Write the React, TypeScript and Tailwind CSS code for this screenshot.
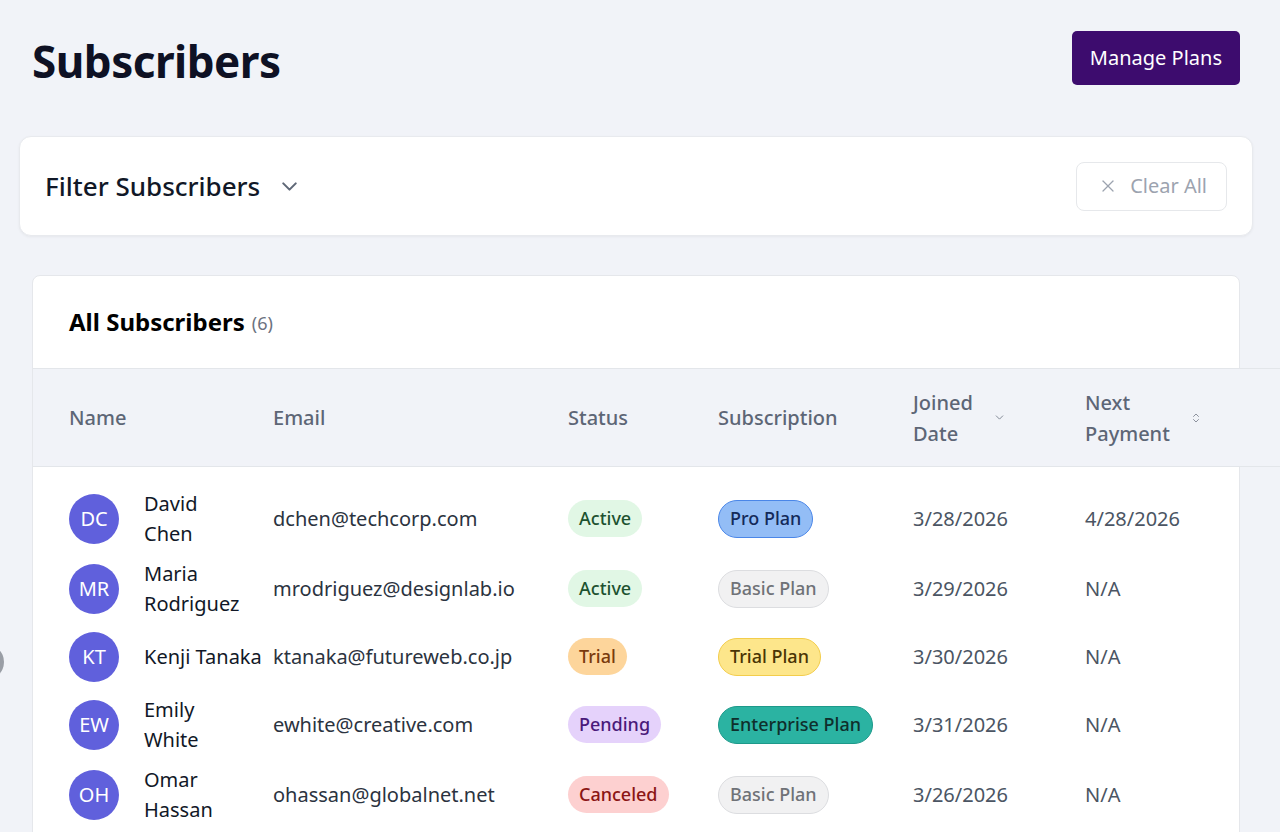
import { ChevronDown, ChevronsUpDown, X } from "lucide-react";

type Status = "Active" | "Trial" | "Pending" | "Canceled";
type Plan = "Pro Plan" | "Basic Plan" | "Trial Plan" | "Enterprise Plan";

interface Subscriber {
  initials: string;
  name: string[];
  email: string;
  status: Status;
  plan: Plan;
  joined: string;
  next: string;
}

const subscribers: Subscriber[] = [
  { initials: "DC", name: ["David", "Chen"], email: "dchen@techcorp.com", status: "Active", plan: "Pro Plan", joined: "3/28/2026", next: "4/28/2026" },
  { initials: "MR", name: ["Maria", "Rodriguez"], email: "mrodriguez@designlab.io", status: "Active", plan: "Basic Plan", joined: "3/29/2026", next: "N/A" },
  { initials: "KT", name: ["Kenji Tanaka"], email: "ktanaka@futureweb.co.jp", status: "Trial", plan: "Trial Plan", joined: "3/30/2026", next: "N/A" },
  { initials: "EW", name: ["Emily", "White"], email: "ewhite@creative.com", status: "Pending", plan: "Enterprise Plan", joined: "3/31/2026", next: "N/A" },
  { initials: "OH", name: ["Omar", "Hassan"], email: "ohassan@globalnet.net", status: "Canceled", plan: "Basic Plan", joined: "3/26/2026", next: "N/A" },
];

const statusStyles: Record<Status, string> = {
  Active: "bg-[#e1f7e5] text-[#1d5230]",
  Trial: "bg-[#fdd59b] text-[#7a3a0d]",
  Pending: "bg-[#e5d2fb] text-[#4a1a7a]",
  Canceled: "bg-[#fdd0d0] text-[#8b1515]",
};

const planStyles: Record<Plan, string> = {
  "Pro Plan": "bg-[#93bdf6] border-[#4a86e8] text-[#142a5a]",
  "Basic Plan": "bg-[#f1f1f2] border-[#dcdde0] text-[#6f7277]",
  "Trial Plan": "bg-[#fde68b] border-[#f3cd4b] text-[#4a3505]",
  "Enterprise Plan": "bg-[#2bb3a2] border-[#1d998a] text-[#0f2f2c]",
};

function SortHeader({ lines, icon }: { lines: string[]; icon: "down" | "both" }) {
  return (
    <div className="flex items-center gap-[20px]">
      <span className="flex flex-col">
        {lines.map((l) => (
          <span key={l}>{l}</span>
        ))}
      </span>
      {icon === "down" ? (
        <ChevronDown size={13} strokeWidth={1.5} className="text-[#6b7280]" />
      ) : (
        <ChevronsUpDown size={12} strokeWidth={1.5} className="text-[#6b7280]" />
      )}
    </div>
  );
}

export default function App() {
  return (
    <div
      className="relative min-h-screen overflow-hidden bg-[#f1f3f8] pl-[32px] pr-[40px] pt-[31px] text-[#1f2937]"
      style={{ fontFamily: '"Noto Sans", "Open Sans", sans-serif' }}
    >
      {/* page header */}
      <div className="flex items-center justify-between">
        <h1 className="mt-[6px] text-[44px] leading-none font-bold tracking-[-0.5px] text-[#0e1124]">Subscribers</h1>
        <button className="h-[54px] rounded-[5px] bg-[#3d0c6e] px-[18px] text-[20px] text-white">
          Manage Plans
        </button>
      </div>

      {/* filter bar */}
      <div className="mx-[-13px] mt-[51px] flex h-[100px] items-center justify-between rounded-xl border border-[#e8eaee] bg-white pl-[25px] pr-[25px] shadow-[0_1px_3px_rgba(0,0,0,0.05)]">
        <div className="flex items-center gap-[17px]">
          <span className="text-[26px] font-medium text-[#111827]">Filter Subscribers</span>
          <ChevronDown size={25} strokeWidth={2} className="text-[#5f6877]" />
        </div>
        <button className="flex h-[49px] items-center gap-[12px] rounded-lg border border-[#e6e8eb] pl-[21px] pr-[19px] text-[20px] text-[#9ca3af]">
          <X size={20} strokeWidth={1.5} />
          Clear All
        </button>
      </div>

      {/* subscribers table */}
      <div className="mt-[39px] rounded-t-lg border border-[#e5e7eb] bg-white pb-[24px]">
        <div className="flex h-[92px] items-center gap-[7px] pl-[36px]">
          <span className="text-[24px] font-bold text-black">All Subscribers</span>
          <span className="mt-[3px] text-[18px] text-[#6b7280]">(6)</span>
        </div>
        <table className="w-[1290px] table-fixed border-collapse text-left text-[20px]">
          <colgroup>
            <col className="w-[234px]" />
            <col className="w-[295px]" />
            <col className="w-[150px]" />
            <col className="w-[195px]" />
            <col className="w-[172px]" />
            <col className="w-[196px]" />
            <col className="w-[48px]" />
          </colgroup>
          <thead>
            <tr className="h-[98px] border-y border-[#e3e6ea] bg-[#f1f3f8] font-medium text-[#5d6676]">
              <th className="pl-[36px] font-medium">Name</th>
              <th className="pl-[6px] font-medium">Email</th>
              <th className="pl-[6px] font-medium">Status</th>
              <th className="pl-[6px] font-medium">Subscription</th>
              <th className="pl-[6px] font-medium leading-[31px]">
                <SortHeader lines={["Joined", "Date"]} icon="down" />
              </th>
              <th className="pl-[6px] font-medium leading-[31px]">
                <SortHeader lines={["Next", "Payment"]} icon="both" />
              </th>
              <th />
            </tr>
          </thead>
          <tbody>
            <tr className="h-[17px]">
              <td colSpan={7} />
            </tr>
            {subscribers.map((s) => (
              <tr key={s.email} className={s.name.length > 1 ? "h-[70px]" : "h-[66px]"}>
                <td className="pl-[36px]">
                  <div className="flex items-center gap-[25px]">
                    <span className="flex h-[50px] w-[50px] shrink-0 items-center justify-center rounded-full bg-[#6060dc] text-[20px] text-white">
                      {s.initials}
                    </span>
                    <span className="flex flex-col whitespace-nowrap leading-[30px] text-[#111827]">
                      {s.name.map((n) => (
                        <span key={n}>{n}</span>
                      ))}
                    </span>
                  </div>
                </td>
                <td className="pl-[6px] whitespace-nowrap text-[#2b3340]">{s.email}</td>
                <td className="pl-[6px]">
                  <span className={`inline-flex h-[37px] items-center rounded-full px-[11px] text-[18px] font-medium ${statusStyles[s.status]}`}>
                    {s.status}
                  </span>
                </td>
                <td className="pl-[6px]">
                  <span className={`inline-flex h-[38px] items-center whitespace-nowrap rounded-full border px-[11px] text-[18px] font-medium ${planStyles[s.plan]}`}>
                    {s.plan}
                  </span>
                </td>
                <td className="pl-[6px] text-[#4b5563]">{s.joined}</td>
                <td className="pl-[6px] text-[#4b5563]">{s.next}</td>
                <td />
              </tr>
            ))}
          </tbody>
        </table>
      </div>

      {/* floating handle, mostly off-screen */}
      <div className="absolute left-[-32px] top-[644px] h-[36px] w-[36px] rounded-full bg-[#9a9ea6]" />
    </div>
  );
}
